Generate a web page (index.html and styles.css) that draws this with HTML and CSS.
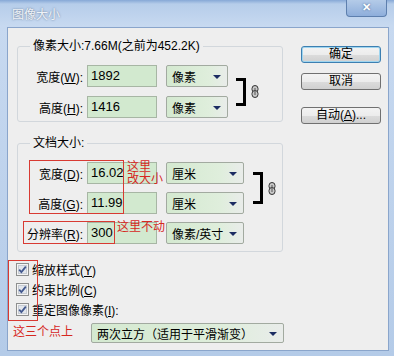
FILE: index.html
```html
<!DOCTYPE html>
<html lang="zh-CN">
<head>
  <meta charset="utf-8">
  <title>图像大小</title>
  <link rel="stylesheet" href="styles.css">
</head>
<body>
  <div class="window">
    <div class="titlebar">
      <span class="title">图像大小</span>
      <span class="close">&#x2715;</span>
    </div>

    <div class="client">
      <div class="main">
        <fieldset class="group g1">
          <legend>像素大小:7.66M(之前为452.2K)</legend>
          <div class="linked">
            <div class="rows">
              <div class="row">
                <span class="label">宽度(<u>W</u>):</span>
                <span class="field">1892</span>
                <span class="combo">像素</span>
              </div>
              <div class="row">
                <span class="label">高度(<u>H</u>):</span>
                <span class="field">1416</span>
                <span class="combo">像素</span>
              </div>
            </div>
            <span class="bracket"></span>
            <svg class="chain" width="8" height="13" viewBox="0 0 8 13">
              <rect x="1" y="0.5" width="6" height="7" rx="3" fill="#c8c8c8" stroke="#333"/>
              <rect x="1" y="5.5" width="6" height="7" rx="3" fill="#c8c8c8" stroke="#333"/>
              <line x1="4" y1="3" x2="4" y2="10" stroke="#555"/>
            </svg>
          </div>
        </fieldset>

        <fieldset class="group g2">
          <legend>文档大小:</legend>
          <div class="linked">
            <div class="rows">
              <div class="row">
                <span class="label">宽度(<u>D</u>):</span>
                <span class="field">16.02</span>
                <span class="combo">厘米</span>
              </div>
              <div class="row">
                <span class="label">高度(<u>G</u>):</span>
                <span class="field">11.99</span>
                <span class="combo">厘米</span>
              </div>
            </div>
            <span class="bracket"></span>
            <svg class="chain" width="8" height="13" viewBox="0 0 8 13">
              <rect x="1" y="0.5" width="6" height="7" rx="3" fill="#c8c8c8" stroke="#333"/>
              <rect x="1" y="5.5" width="6" height="7" rx="3" fill="#c8c8c8" stroke="#333"/>
              <line x1="4" y1="3" x2="4" y2="10" stroke="#555"/>
            </svg>
          </div>
          <div class="row res">
            <span class="label">分辨率(<u>R</u>):</span>
            <span class="field">300</span>
            <span class="combo">像素/英寸</span>
          </div>
        </fieldset>

        <div class="checks">
          <div class="check">
            <svg class="box" width="13" height="13" viewBox="0 0 13 13">
              <rect x="0.5" y="0.5" width="12" height="12" fill="#f4f4f4" stroke="#8e8f8f"/>
              <rect x="2.5" y="2.5" width="8" height="8" fill="#e2e6ec" stroke="#c6cbd3"/>
              <path d="M3.2 6.6 L5.4 9 L9.8 3.6" fill="none" stroke="#44598f" stroke-width="1.8"/>
            </svg>
            <span>缩放样式(<u>Y</u>)</span>
          </div>
          <div class="check">
            <svg class="box" width="13" height="13" viewBox="0 0 13 13">
              <rect x="0.5" y="0.5" width="12" height="12" fill="#f4f4f4" stroke="#8e8f8f"/>
              <rect x="2.5" y="2.5" width="8" height="8" fill="#e2e6ec" stroke="#c6cbd3"/>
              <path d="M3.2 6.6 L5.4 9 L9.8 3.6" fill="none" stroke="#44598f" stroke-width="1.8"/>
            </svg>
            <span>约束比例(<u>C</u>)</span>
          </div>
          <div class="check">
            <svg class="box" width="13" height="13" viewBox="0 0 13 13">
              <rect x="0.5" y="0.5" width="12" height="12" fill="#f4f4f4" stroke="#8e8f8f"/>
              <rect x="2.5" y="2.5" width="8" height="8" fill="#e2e6ec" stroke="#c6cbd3"/>
              <path d="M3.2 6.6 L5.4 9 L9.8 3.6" fill="none" stroke="#44598f" stroke-width="1.8"/>
            </svg>
            <span>重定图像像素(<u>I</u>):</span>
          </div>
        </div>

        <div class="resample">
          <span class="combo wide">两次立方（适用于平滑渐变）</span>
        </div>
      </div>

      <div class="side">
        <span class="btn default">确定</span>
        <span class="btn">取消</span>
        <span class="btn auto">自动(<u>A</u>)...</span>
      </div>
    </div>

    <!-- red notes drawn over the dialog -->
    <div class="note box1"></div>
    <div class="note box2"></div>
    <div class="note box3"></div>
    <div class="memo m1">这里<br>改大小</div>
    <div class="memo m2">这里不动</div>
    <div class="memo m3">这三个点上</div>
  </div>
</body>
</html>
```

FILE: styles.css
```css
html, body {
  margin: 0;
  padding: 0;
}
body {
  width: 394px;
  height: 356px;
  overflow: hidden;
  font: 12px "Liberation Sans", "Noto Sans CJK SC", sans-serif;
  color: #000;
}

.window {
  position: relative;
  height: 356px;
  display: flex;
  flex-direction: column;
  background: linear-gradient(#86a8d6 0, #b6cdea 4px, #c7d9f0 26px, #b4cbe8 100%);
}

.titlebar {
  height: 27px;
  flex: none;
  display: flex;
  align-items: flex-start;
}
.title {
  margin: 5px 0 0 12px;
  font-size: 12px;
  color: #eef2f7;
  text-shadow: 0 0 2px rgba(50, 70, 100, .7);
}
.close {
  margin: 0 7px 0 auto;
  width: 41px;
  height: 17px;
  box-sizing: border-box;
  border: 1px solid #5d7fae;
  border-top: none;
  border-radius: 0 0 4px 4px;
  background: linear-gradient(#b4cbe8, #8eaedb);
  color: #fff;
  font-size: 11px;
  font-weight: bold;
  text-align: center;
  line-height: 15px;
  text-shadow: 0 0 2px #3d5b88;
}

.client {
  flex: 1;
  display: flex;
  margin: 0 5px 5px 7px;
  border: 1px solid #8aa5cb;
  background: #eeeeee;
}

.main {
  flex: none;
  width: 266px;
  padding: 11px 0 0 9px;
}

.group {
  margin: 0;
  padding: 12px 0 3px 0;
  min-width: 0;
  border: 1px solid #d2d7dc;
  border-radius: 3px;
  box-sizing: border-box;
  width: 266px;
}
.group legend {
  margin-left: 12px;
  padding: 0 3px;
  line-height: 14px;
}
.g2 {
  margin-top: 14px;
  padding-bottom: 7px;
}

.linked {
  display: flex;
  align-items: center;
}
.rows {
  flex: none;
  display: flex;
  flex-direction: column;
  gap: 9px;
}
.g2 .rows { gap: 8px; }

.row {
  display: flex;
  align-items: center;
  height: 22px;
}
.row.res { margin-top: 8px; }

.label {
  flex: none;
  width: 65px;
  text-align: right;
  margin-right: 4px;
}

.field {
  flex: none;
  width: 70px;
  height: 22px;
  box-sizing: border-box;
  border: 1px solid #a7b6a4;
  background: #d2e9cf;
  padding-left: 3px;
  font: 13px/20px "Liberation Sans", sans-serif;
}

.combo {
  flex: none;
  display: flex;
  align-items: center;
  margin-left: 9px;
  width: 62px;
  height: 22px;
  box-sizing: border-box;
  padding-left: 5px;
  border: 1px solid #a2aaa0;
  border-radius: 2px;
  background: linear-gradient(to right, #d4e9d0, #dfeedc 70%, #e9ecea);
}
.combo::after {
  content: "";
  margin: 1px 6px 0 auto;
  border-left: 4px solid transparent;
  border-right: 4px solid transparent;
  border-top: 4px solid #1c2c62;
}
.g2 .combo { width: 78px; }

.bracket {
  flex: none;
  width: 7px;
  height: 22px;
  margin-left: 8px;
  border: 3px solid #000;
  border-left: none;
}
.g2 .bracket {
  height: 26px;
  margin-left: 9px;
}
.chain {
  flex: none;
  margin-left: 5px;
}

.checks {
  margin: 7px 0 0 -1px;
}
.check {
  display: flex;
  align-items: center;
  height: 20px;
}
.check .box { margin-right: 3px; }

.resample {
  margin-top: 4px;
  display: flex;
}
.combo.wide {
  width: 193px;
  height: 20px;
  margin-left: 74px;
  font-size: 12px;
}

.side {
  flex: none;
  width: 80px;
  margin-left: 18px;
  padding-top: 18px;
  display: flex;
  flex-direction: column;
}
.btn {
  height: 17px;
  box-sizing: border-box;
  border: 1px solid #707070;
  border-radius: 3px;
  background: linear-gradient(#f3f3f3 0, #ececec 50%, #dcdcdc 51%, #d0d0d0 100%);
  text-align: center;
  line-height: 15px;
}
.btn.default {
  border-color: #3c7fb1;
  box-shadow: inset 0 0 0 1px #9fd5ef;
}
.btn + .btn { margin-top: 10px; }
.btn.auto { margin-top: 17px; }

.note {
  position: absolute;
  border: 1px solid #d83a32;
}
.box1 { left: 29px; top: 160px; width: 93px; height: 52px; }
.box2 { left: 23px; top: 221px; width: 90px; height: 21px; }
.box3 { left: 8px; top: 260px; width: 28px; height: 59px; }

.memo {
  position: absolute;
  color: #d6281f;
  font-size: 12px;
  line-height: 12px;
}
.m1 { left: 127px; top: 161px; }
.m2 { left: 117px; top: 221px; }
.m3 { left: 13px; top: 326px; }
```
